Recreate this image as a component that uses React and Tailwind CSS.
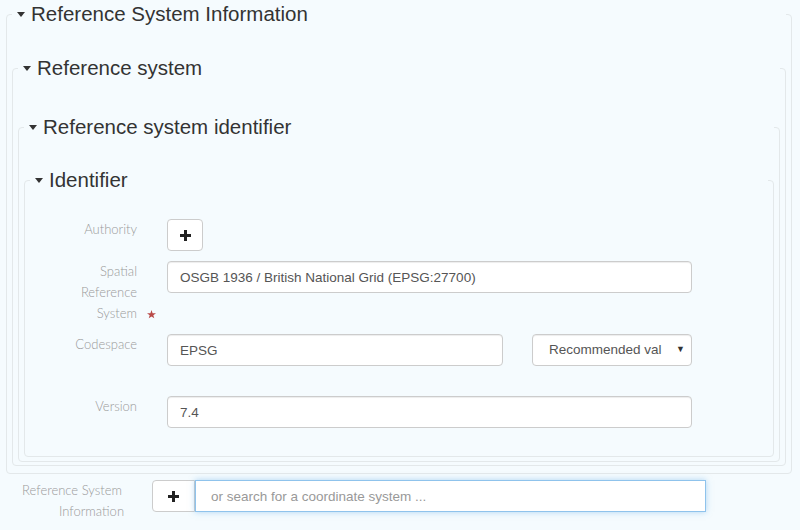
import React from "react"

const Caret = () => (
  <svg width="8" height="5" viewBox="0 0 8 5" className="shrink-0">
    <path d="M0 0h8L4 5z" fill="#333" />
  </svg>
)

const Plus = () => (
  <svg width="11" height="11" viewBox="0 0 11 11">
    <path d="M4 0h3v4h4v3H7v4H4V7H0V4h4z" fill="#222" />
  </svg>
)

const Star = () => (
  <svg width="9" height="9" viewBox="0 0 10 10" className="absolute -right-[19px] bottom-[5px]">
    <path d="M5 0l1.2 3.5H10L7 5.7l1.1 3.6L5 7.1 1.9 9.3 3 5.7 0 3.5h3.8z" fill="#b94a48" />
  </svg>
)

const Legend = ({ children }) => (
  <legend className="w-full p-0">
    <span className="flex items-center h-[28px] pl-[5px] text-[20.5px] leading-[28px] text-[#333]">
      <Caret />
      <span className="ml-[6px]">{children}</span>
    </span>
  </legend>
)

const Label = ({ children, required }) => (
  <div className="w-[137px] shrink-0 pr-[30px] flex justify-end">
    <span className="relative max-w-[80px] text-right text-[13px] leading-[21px] text-[#9a9a9a] font-light font-['Lato',sans-serif]">
      {children}
      {required && <Star />}
    </span>
  </div>
)

const inputCls =
  "h-[32px] bg-white border border-[#ccc] rounded-[4px] px-[12px] text-[13.5px] text-[#555] shadow-[inset_0_1px_1px_rgba(0,0,0,0.075)] outline-none"

export default function App() {
  return (
    <div className="min-h-screen bg-[#f5fbfe] pl-[6px] font-['Liberation_Sans',Arial,sans-serif]">
      <fieldset className="w-[786px] border border-[#e3e8ea] rounded-[4px] px-[5px] pt-[26px] pb-[7px]">
        <Legend>Reference System Information</Legend>
        <fieldset className="border border-[#e3e8ea] rounded-[4px] px-[5px] pt-[31px] pb-[3px]">
          <Legend>Reference system</Legend>
          <fieldset className="border border-[#e3e8ea] rounded-[4px] px-[5px] pt-[25px] pb-[4px]">
            <Legend>Reference system identifier</Legend>
            <fieldset className="border border-[#e3e8ea] rounded-[4px] px-[5px] pt-[25px] pb-[28px]">
              <Legend>Identifier</Legend>

              <div className="flex items-start mb-[10px]">
                <Label>Authority</Label>
                <button className="w-[36px] h-[32px] flex items-center justify-center bg-white border border-[#ccc] rounded-[4px]">
                  <Plus />
                </button>
              </div>

              <div className="flex items-start mb-[10px]">
                <Label required>Spatial Reference System</Label>
                <input
                  readOnly
                  value="OSGB 1936 / British National Grid (EPSG:27700)"
                  className={`${inputCls} w-[525px]`}
                />
              </div>

              <div className="flex items-start mb-[30px]">
                <Label>Codespace</Label>
                <input readOnly value="EPSG" className={`${inputCls} w-[336px]`} />
                <div className="ml-[29px] w-[160px] h-[32px] bg-white border border-[#ccc] rounded-[4px] shadow-[inset_0_1px_1px_rgba(0,0,0,0.075)] flex items-center pl-[16px] pr-[6px]">
                  <span className="whitespace-nowrap text-[13.5px] text-[#555]">Recommended val</span>
                  <span className="ml-auto text-[9px] text-[#333]">▼</span>
                </div>
              </div>

              <div className="flex items-start">
                <Label>Version</Label>
                <input readOnly value="7.4" className={`${inputCls} w-[525px]`} />
              </div>
            </fieldset>
          </fieldset>
        </fieldset>
      </fieldset>

      <div className="flex items-start mt-[6px]">
        <div className="w-[146px] shrink-0 text-[13px] leading-[21px] text-[#9a9a9a] font-light font-['Lato',sans-serif]">
          <div className="pl-[16px]">Reference System</div>
          <div className="pl-[53px]">Information</div>
        </div>
        <button className="w-[43px] h-[32px] flex items-center justify-center bg-white border border-[#ccc] rounded-l-[4px]">
          <Plus />
        </button>
        <input
          readOnly
          placeholder="or search for a coordinate system ..."
          className="w-[511px] h-[32px] bg-white border border-[#8fc3ec] px-[15px] text-[13.5px] text-[#555] placeholder:text-[#999] outline-none shadow-[0_0_6px_rgba(102,175,233,0.5)]"
        />
      </div>
    </div>
  )
}
